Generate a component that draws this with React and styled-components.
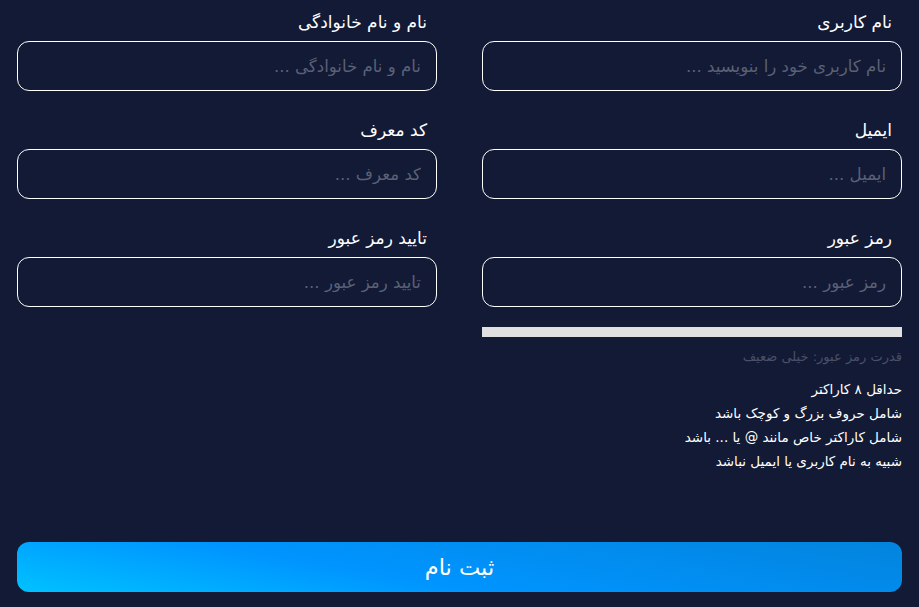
import React from 'react'
import styled, { createGlobalStyle } from 'styled-components';

const GlobalStyle = createGlobalStyle`
  body {
    margin: 0;
    background: #121a35;
    font-family: "DejaVu Sans", "Noto Sans", sans-serif;
  }
`;

const Page = styled.form`
  direction: rtl;
  width: 919px;
  height: 607px;
  box-sizing: border-box;
  padding: 10px 17px 0;
  display: flex;
  flex-direction: column;
`;

const Grid = styled.div`
  display: grid;
  grid-template-columns: 1fr 1fr;
  column-gap: 45px;
  row-gap: 27px;
`;

const Field = styled.div`
  display: flex;
  flex-direction: column;
`;

const Label = styled.label`
  color: #ffffff;
  font-size: 17px;
  line-height: 24px;
  margin: 0 10px 7px 0;
`;

const Input = styled.input`
  height: 50px;
  box-sizing: border-box;
  border: 1px solid #ffffff;
  border-radius: 12px;
  background: transparent;
  padding: 0 15px;
  font-family: inherit;
  font-size: 16.6px;
  color: #ffffff;
  outline: none;
  &::placeholder {
    color: #5b6175;
  }
`;

const Strength = styled.div`
  grid-column: 1;
  display: flex;
  flex-direction: column;
  margin-top: -7px;
`;

const Bar = styled.div`
  height: 10px;
  background: #e0e0e0;
`;

const StrengthText = styled.p`
  margin: 10px 0 0;
  color: #4a5068;
  font-size: 13px;
  line-height: 20px;
`;

const Rules = styled.ul`
  list-style: none;
  margin: 10px 0 0;
  padding: 0;
`;

const Rule = styled.li`
  color: #ffffff;
  font-size: 13.5px;
  line-height: 24px;
`;

const Submit = styled.button`
  margin-top: 69px;
  height: 50px;
  border: none;
  border-radius: 12px;
  background: linear-gradient(10deg, #00c2ff 0%, #0094ff 40%, #0384dd 100%);
  color: #ffffff;
  font-family: inherit;
  font-size: 22.5px;
  cursor: pointer;
`;

const fields = [
  { label: 'نام کاربری', placeholder: 'نام کاربری خود را بنویسید ...' },
  { label: 'نام و نام خانوادگی', placeholder: 'نام و نام خانوادگی ...' },
  { label: 'ایمیل', placeholder: 'ایمیل ...' },
  { label: 'کد معرف', placeholder: 'کد معرف ...' },
  { label: 'رمز عبور', placeholder: 'رمز عبور ...', type: 'password' },
  { label: 'تایید رمز عبور', placeholder: 'تایید رمز عبور ...', type: 'password' },
];

const rules = [
  'حداقل ۸ کاراکتر',
  'شامل حروف بزرگ و کوچک باشد',
  'شامل کاراکتر خاص مانند @ یا ... باشد',
  'شبیه به نام کاربری یا ایمیل نباشد',
];

function App() {
  return (
    <>
      <GlobalStyle />
      <Page onSubmit={(e) => e.preventDefault()}>
        <Grid>
          {fields.map((f) => (
            <Field key={f.label}>
              <Label>{f.label}</Label>
              <Input type={f.type || 'text'} placeholder={f.placeholder} />
            </Field>
          ))}
          <Strength>
            <Bar />
            <StrengthText>قدرت رمز عبور: خیلی ضعیف</StrengthText>
            <Rules>
              {rules.map((r) => (
                <Rule key={r}>{r}</Rule>
              ))}
            </Rules>
          </Strength>
        </Grid>
        <Submit type="submit">ثبت نام</Submit>
      </Page>
    </>
  );
}

export default App;
